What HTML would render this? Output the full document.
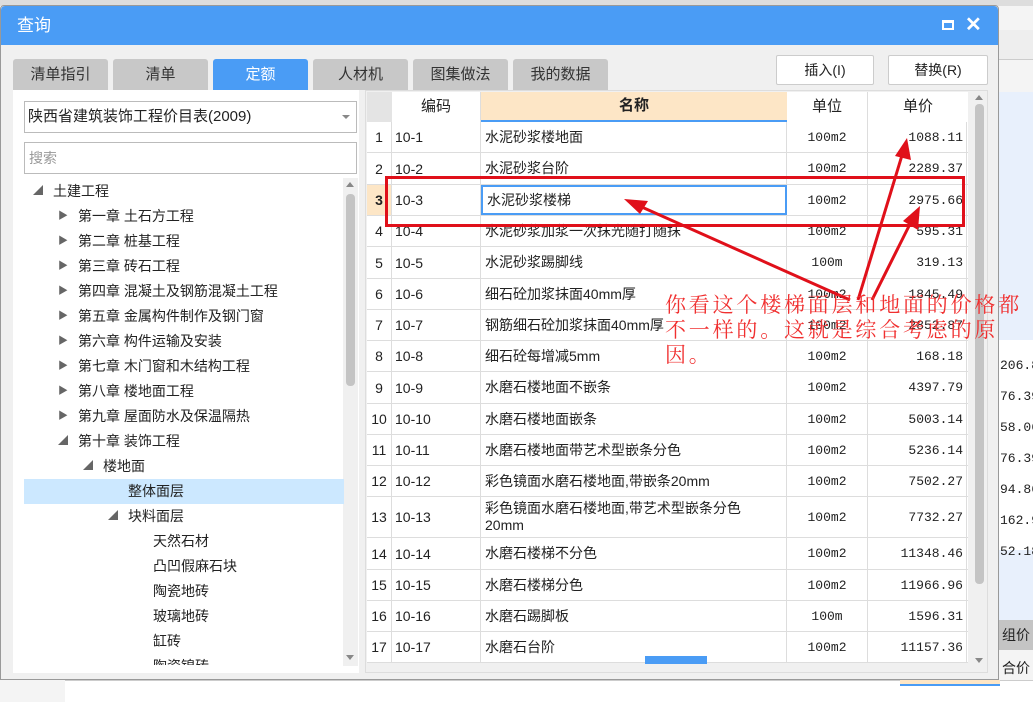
<!DOCTYPE html>
<html><head><meta charset="utf-8"><style>
*{box-sizing:border-box;margin:0;padding:0}
body{width:1033px;height:702px;overflow:hidden;background:#f4f4f4;font-family:"Liberation Sans","Noto Sans CJK SC",sans-serif;font-size:14px;color:#222;position:relative}
.abs{position:absolute}
.tab{position:absolute;top:59px;height:31px;width:95px;background:#c8c8c8;border-radius:3px 3px 0 0;text-align:center;line-height:31px;font-size:15px;color:#333}
.btn{position:absolute;top:55px;height:30px;background:#fff;border:1px solid #ccc;border-radius:2px;text-align:center;line-height:28px;font-size:14px}
.tree{position:absolute;font-size:14px;line-height:25px;white-space:nowrap}
.row{position:absolute;left:367px;width:601px;background:#fff;border-bottom:1px solid #ddd}
.row div{position:absolute;top:0;height:100%;display:flex;align-items:center;border-right:1px solid #ddd}
.c0{left:0;width:25px;justify-content:center;background:#fff}
.c1{left:25px;width:89px;padding-left:3px}
.c2{left:114px;width:306px;padding-left:4px;line-height:17px}
.c3{left:420px;width:81px;justify-content:center;font-family:"Liberation Mono",monospace;font-size:13px}
.c4{left:501px;width:99px;justify-content:flex-end;padding-right:3px;font-family:"Liberation Mono",monospace;font-size:13px}
</style></head><body>
<div class="abs" style="left:0;top:0;width:1033px;height:6px;background:#ddd"></div>
<div class="abs" style="left:998px;top:30px;width:35px;height:30px;background:#eee;border-bottom:1px solid #ccc"></div>
<div class="abs" style="left:998px;top:92px;width:35px;height:530px;background:#e8f0fc"></div>
<div class="abs" style="left:998px;top:340px;width:35px;height:210px;background:#fff"></div>
<div class="abs" style="left:1000px;top:350px;font-size:13px;line-height:31px;font-family:'Liberation Mono',monospace">206.8<br>76.39<br>58.06<br>76.39<br>94.86<br>162.9<br>52.18</div>
<div class="abs" style="left:998px;top:620px;width:35px;height:30px;background:#c4c4c4;line-height:30px;padding-left:4px">组价</div>
<div class="abs" style="left:1002px;top:658px">合价</div>
<div class="abs" style="left:65px;top:680px;width:968px;height:22px;background:#fff;border-top:1px solid #ccc"></div>
<div class="abs" style="left:900px;top:680px;width:100px;height:6px;background:#fde6c6;border-bottom:2px solid #4a9cf5"></div>
<div class="abs" style="left:0;top:5px;width:999px;height:675px;background:#f0f0f0;border:1px solid #999;border-radius:4px 4px 0 0"></div>
<div class="abs" style="left:1px;top:6px;width:997px;height:39px;background:#4a9cf5;border-radius:4px 4px 0 0;color:#fff;font-size:17px;line-height:40px;padding-left:16px">查询</div>
<div class="abs" style="left:942px;top:20px;width:12px;height:10px;border:2px solid #fff;border-top-width:3px"></div>
<div class="abs" style="left:965px;top:12px;color:#fff;font-size:20px;font-weight:bold">✕</div>
<div class="tab" style="left:13px">清单指引</div>
<div class="tab" style="left:113px">清单</div>
<div class="tab" style="left:213px;background:#4a9cf5;color:#fff">定额</div>
<div class="tab" style="left:313px">人材机</div>
<div class="tab" style="left:413px">图集做法</div>
<div class="tab" style="left:513px">我的数据</div>
<div class="btn" style="left:776px;width:98px">插入(I)</div>
<div class="btn" style="left:888px;width:100px">替换(R)</div>
<div class="abs" style="left:13px;top:90px;width:346px;height:583px;background:#fff"></div>
<div class="abs" style="left:24px;top:101px;width:333px;height:32px;border:1px solid #bbb;background:#fff;line-height:30px;padding-left:3px;font-size:15px">陕西省建筑装饰工程价目表(2009)</div>
<div class="abs" style="left:342px;top:115px;border-left:4px solid transparent;border-right:4px solid transparent;border-top:4px solid #888"></div>
<div class="abs" style="left:24px;top:142px;width:333px;height:32px;border:1px solid #bbb;background:#fff;line-height:30px;padding-left:4px;color:#999">搜索</div>
<div class="abs" style="left:343px;top:178px;width:15px;height:488px;background:#f0f0f0"></div>
<div class="abs" style="left:346px;top:194px;width:9px;height:192px;background:#c4c4c4;border-radius:4px"></div>
<div class="abs" style="left:346px;top:182px;border-left:4px solid transparent;border-right:4px solid transparent;border-bottom:5px solid #888"></div>
<div class="abs" style="left:346px;top:655px;border-left:4px solid transparent;border-right:4px solid transparent;border-top:5px solid #888"></div>
<div class="abs" style="left:24px;top:479px;width:320px;height:25px;background:#cce8ff"></div>
<div class="tree" style="left:33px;top:179px;color:#666;font-size:10px">◢</div>
<div class="tree" style="left:53px;top:179px">土建工程</div>
<div class="tree" style="left:58px;top:204px;color:#666;font-size:10px;line-height:25px">▶<br>▶<br>▶<br>▶<br>▶<br>▶<br>▶<br>▶<br>▶</div>
<div class="tree" style="left:78px;top:204px">第一章 土石方工程<br>第二章 桩基工程<br>第三章 砖石工程<br>第四章 混凝土及钢筋混凝土工程<br>第五章 金属构件制作及钢门窗<br>第六章 构件运输及安装<br>第七章 木门窗和木结构工程<br>第八章 楼地面工程<br>第九章 屋面防水及保温隔热</div>
<div class="tree" style="left:58px;top:429px;color:#666;font-size:10px">◢</div>
<div class="tree" style="left:78px;top:429px">第十章 装饰工程</div>
<div class="tree" style="left:83px;top:454px;color:#666;font-size:10px">◢</div>
<div class="tree" style="left:103px;top:454px">楼地面</div>
<div class="tree" style="left:128px;top:479px">整体面层</div>
<div class="tree" style="left:108px;top:504px;color:#666;font-size:10px">◢</div>
<div class="tree" style="left:128px;top:504px">块料面层</div>
<div class="tree" style="left:153px;top:529px;height:136px;overflow:hidden">天然石材<br>凸凹假麻石块<br>陶瓷地砖<br>玻璃地砖<br>缸砖<br>陶瓷锦砖</div>
<div class="abs" style="left:365px;top:90px;width:623px;height:583px;background:#f0f0f0;border:1px solid #ddd"></div>
<div class="abs" style="left:367px;top:92px;width:25px;height:30px;background:#e4e4e4"></div>
<div class="abs" style="left:392px;top:92px;width:89px;height:30px;background:#fff;border-right:1px solid #ddd;text-align:center;line-height:30px;font-size:15px">编码</div>
<div class="abs" style="left:481px;top:92px;width:306px;height:30px;background:#fde6c6;border-bottom:2px solid #4a9cf5;text-align:center;line-height:28px;font-size:15px;font-weight:bold">名称</div>
<div class="abs" style="left:787px;top:92px;width:81px;height:30px;background:#fff;border-right:1px solid #ddd;text-align:center;line-height:30px;font-size:15px">单位</div>
<div class="abs" style="left:868px;top:92px;width:100px;height:30px;background:#fff;text-align:center;line-height:30px;font-size:15px">单价</div>
<div class="row" style="top:122px;height:31px"><div class="c0">1</div><div class="c1">10-1</div><div class="c2">水泥砂浆楼地面</div><div class="c3">100m2</div><div class="c4">1088.11</div></div>
<div class="row" style="top:153px;height:32px"><div class="c0">2</div><div class="c1">10-2</div><div class="c2">水泥砂浆台阶</div><div class="c3">100m2</div><div class="c4">2289.37</div></div>
<div class="row" style="top:185px;height:31px"><div class="c0" style="background:#fde6c6;font-weight:bold">3</div><div class="c1">10-3</div><div class="c2" style="border:2px solid #4a9cf5">水泥砂浆楼梯</div><div class="c3">100m2</div><div class="c4">2975.66</div></div>
<div class="row" style="top:216px;height:31px"><div class="c0">4</div><div class="c1">10-4</div><div class="c2">水泥砂浆加浆一次抹光随打随抹</div><div class="c3">100m2</div><div class="c4">595.31</div></div>
<div class="row" style="top:247px;height:32px"><div class="c0">5</div><div class="c1">10-5</div><div class="c2">水泥砂浆踢脚线</div><div class="c3">100m</div><div class="c4">319.13</div></div>
<div class="row" style="top:279px;height:31px"><div class="c0">6</div><div class="c1">10-6</div><div class="c2">细石砼加浆抹面40mm厚</div><div class="c3">100m2</div><div class="c4">1845.49</div></div>
<div class="row" style="top:310px;height:31px"><div class="c0">7</div><div class="c1">10-7</div><div class="c2">钢筋细石砼加浆抹面40mm厚</div><div class="c3">100m2</div><div class="c4">2852.87</div></div>
<div class="row" style="top:341px;height:31px"><div class="c0">8</div><div class="c1">10-8</div><div class="c2">细石砼每增减5mm</div><div class="c3">100m2</div><div class="c4">168.18</div></div>
<div class="row" style="top:372px;height:32px"><div class="c0">9</div><div class="c1">10-9</div><div class="c2">水磨石楼地面不嵌条</div><div class="c3">100m2</div><div class="c4">4397.79</div></div>
<div class="row" style="top:404px;height:31px"><div class="c0">10</div><div class="c1">10-10</div><div class="c2">水磨石楼地面嵌条</div><div class="c3">100m2</div><div class="c4">5003.14</div></div>
<div class="row" style="top:435px;height:31px"><div class="c0">11</div><div class="c1">10-11</div><div class="c2">水磨石楼地面带艺术型嵌条分色</div><div class="c3">100m2</div><div class="c4">5236.14</div></div>
<div class="row" style="top:466px;height:31px"><div class="c0">12</div><div class="c1">10-12</div><div class="c2">彩色镜面水磨石楼地面,带嵌条20mm</div><div class="c3">100m2</div><div class="c4">7502.27</div></div>
<div class="row" style="top:497px;height:41px"><div class="c0">13</div><div class="c1">10-13</div><div class="c2">彩色镜面水磨石楼地面,带艺术型嵌条分色<br>20mm</div><div class="c3">100m2</div><div class="c4">7732.27</div></div>
<div class="row" style="top:538px;height:32px"><div class="c0">14</div><div class="c1">10-14</div><div class="c2">水磨石楼梯不分色</div><div class="c3">100m2</div><div class="c4">11348.46</div></div>
<div class="row" style="top:570px;height:31px"><div class="c0">15</div><div class="c1">10-15</div><div class="c2">水磨石楼梯分色</div><div class="c3">100m2</div><div class="c4">11966.96</div></div>
<div class="row" style="top:601px;height:31px"><div class="c0">16</div><div class="c1">10-16</div><div class="c2">水磨石踢脚板</div><div class="c3">100m</div><div class="c4">1596.31</div></div>
<div class="row" style="top:632px;height:31px"><div class="c0">17</div><div class="c1">10-17</div><div class="c2">水磨石台阶</div><div class="c3">100m2</div><div class="c4">11157.36</div></div>
<div class="abs" style="left:367px;top:663px;width:601px;height:9px;background:#f0f0f0"></div>
<div class="abs" style="left:645px;top:656px;width:62px;height:8px;background:#4a9cf5"></div>
<div class="abs" style="left:972px;top:92px;width:15px;height:580px;background:#f0f0f0"></div>
<div class="abs" style="left:975px;top:104px;width:9px;height:480px;background:#c4c4c4;border-radius:4px"></div>
<div class="abs" style="left:975px;top:95px;border-left:4px solid transparent;border-right:4px solid transparent;border-bottom:5px solid #888"></div>
<div class="abs" style="left:975px;top:658px;border-left:4px solid transparent;border-right:4px solid transparent;border-top:5px solid #888"></div>
<div class="abs" style="left:385px;top:176px;width:580px;height:51px;border:3px solid #e0101a"></div>
<svg class="abs" style="left:0;top:0" width="1033" height="702">
<g stroke="#e0101a" stroke-width="3" fill="#e0101a">
<line x1="850" y1="300" x2="635" y2="204"/>
<polygon points="624,199 648,201 640,214" stroke="none"/>
<line x1="858" y1="300" x2="903" y2="152"/>
<polygon points="907,138 911,160 895,156" stroke="none"/>
<line x1="872" y1="300" x2="912" y2="220"/>
<polygon points="920,206 918,230 903,221" stroke="none"/>
</g></svg>
<div class="abs" style="left:665px;top:293px;color:#f03030;font-size:21px;line-height:25px;width:370px;font-family:'Liberation Serif','Noto Serif CJK SC',serif;letter-spacing:2.8px;white-space:nowrap">你看这个楼梯面层和地面的价格都<br>不一样的。这就是综合考虑的原<br>因。</div>
</body></html>
